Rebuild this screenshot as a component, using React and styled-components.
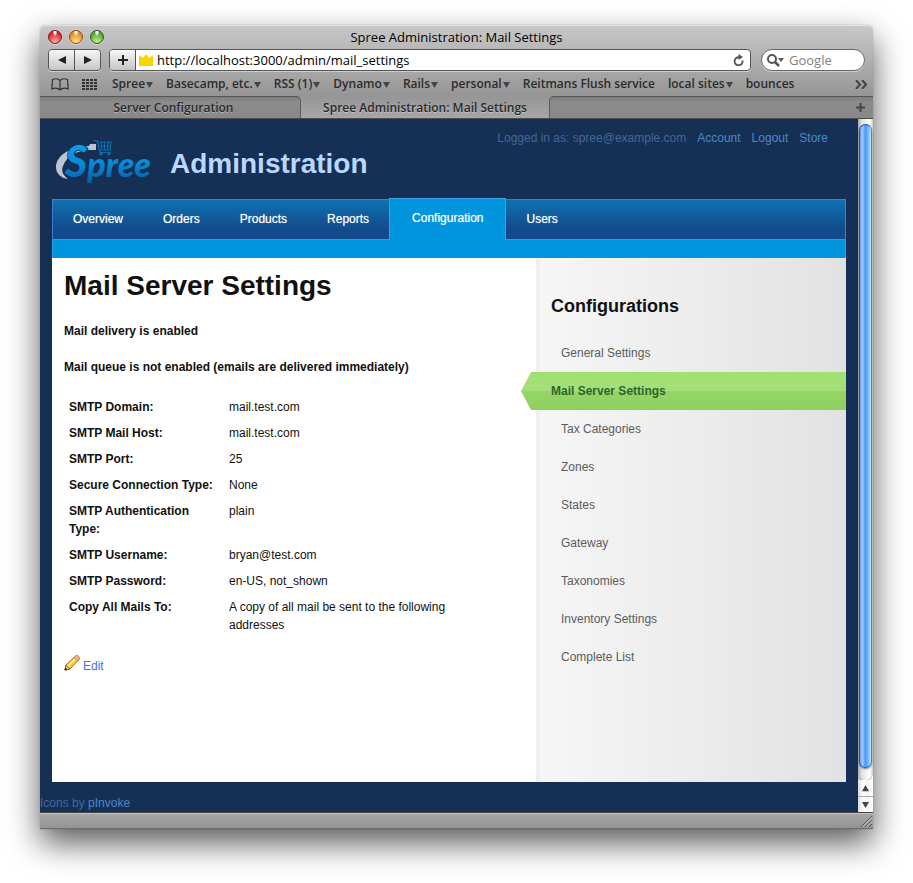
import React from "react";
import styled, { createGlobalStyle, css } from "styled-components";

const chromeFont = `"Open Sans", "Noto Sans", sans-serif`;
const pageFont = `"Liberation Sans", Arial, sans-serif`;

const GlobalStyle = createGlobalStyle`
  *, *::before, *::after { box-sizing: border-box; }
  body { margin: 0; background: #fff; }
  h1, h2, p, ul { margin: 0; padding: 0; }
  ul { list-style: none; }
  a { text-decoration: none; }
  button, input { font: inherit; color: inherit; margin: 0; padding: 0; border: 0; background: none; }
`;

const Desktop = styled.div`
  min-height: 100vh;
  padding: 25px 40px 54px;
  display: flex;
  overflow: hidden;
`;

const Window = styled.div`
  flex: 1;
  min-width: 0;
  display: flex;
  flex-direction: column;
  border-radius: 5px 5px 0 0;
  box-shadow: 0 0 1px rgba(0, 0, 0, 0.5), 0 14px 32px rgba(0, 0, 0, 0.65);
`;

const Chrome = styled.header`
  font-family: ${chromeFont};
  color: #000;
  border-radius: 5px 5px 0 0;
  background: linear-gradient(#c9c9c9, #969696 70px);
  box-shadow: inset 0 1px 0 #e4e4e4;
`;

const TitleBar = styled.div`
  height: 23px;
  display: grid;
  grid-template-columns: 80px 1fr 80px;
  align-items: center;
  padding: 0 8px;
`;

const Lights = styled.div`
  display: flex;
  gap: 7px;
`;

const Light = styled.button`
  width: 14px;
  height: 14px;
  border-radius: 50%;
  border: 1px solid ${(p) => p.$edge};
  background: radial-gradient(ellipse at 50% 8%, #fff 0 8%, transparent 30%),
    radial-gradient(circle at 50% 90%, ${(p) => p.$glow}, ${(p) => p.$base} 70%);
  box-shadow: 0 1px 0 rgba(255, 255, 255, 0.5);
`;

const Title = styled.div`
  text-align: center;
  font-size: 13px;
  line-height: 20px;
`;

const Toolbar = styled.div`
  height: 24px;
  display: flex;
  align-items: center;
  padding: 0 8px;
  gap: 8px;
`;

const ButtonGroup = styled.div`
  display: flex;
  border: 1px solid #555;
  border-radius: 4px;
  box-shadow: 0 1px 0 rgba(255, 255, 255, 0.45);
  overflow: hidden;
`;

const ToolButton = styled.button`
  width: 25px;
  height: 20px;
  display: flex;
  align-items: center;
  justify-content: center;
  background: linear-gradient(#f8f8f8, #c6c6c6);
  & + & { width: 26px; border-left: 1px solid #555; }
`;

const AddressBar = styled(ButtonGroup)`
  flex: 1;
  min-width: 0;
  background: #fff;
  margin-right: 2px;
`;

const AddressLabel = styled.label`
  flex: 1;
  min-width: 0;
  display: flex;
  align-items: center;
  gap: 4px;
  padding: 0 3px;
  border-left: 1px solid #555;
`;

const AddressInput = styled.input`
  flex: 1;
  min-width: 0;
  font-size: 13px;
  line-height: 20px;
  height: 20px;
  outline: none;
`;

const Reload = styled.button`
  width: 22px;
  display: flex;
  align-items: center;
  justify-content: center;
`;

const Search = styled.label`
  width: 104px;
  height: 22px;
  display: flex;
  align-items: center;
  gap: 4px;
  padding: 0 5px;
  border: 1px solid #666;
  border-radius: 11px;
  background: #fff;
  box-shadow: 0 1px 0 rgba(255, 255, 255, 0.45);
`;

const SearchInput = styled.input`
  flex: 1;
  min-width: 0;
  font-size: 13px;
  height: 20px;
  outline: none;
  &::placeholder { color: #808080; opacity: 1; }
`;

const Bookmarks = styled.nav`
  height: 24px;
  display: flex;
  align-items: center;
  padding: 0 6px 0 11px;
  font-size: 12px;
  font-weight: 600;
  color: #2c2c2c;
  text-shadow: 0 1px 0 rgba(255, 255, 255, 0.35);
`;

const IconButton = styled.button`
  display: flex;
  align-items: center;
  margin-right: ${(p) => p.$gap || 0}px;
`;

const BookmarkList = styled.div`
  flex: 1;
  min-width: 0;
  display: flex;
  gap: 13px;
  overflow: hidden;
`;

const Bookmark = styled.button`
  display: flex;
  align-items: center;
  gap: 1px;
  line-height: 18px;
  white-space: nowrap;
`;

const TabStrip = styled.div`
  height: 23px;
  display: flex;
  font-size: 12px;
  font-weight: 600;
  color: #2a2a2a;
  border-bottom: 1px solid #4d4d4d;
  background: linear-gradient(#969696, #a6a6a6);
`;

const darkTab = css`
  background: linear-gradient(#7e7e7e, #8b8b8b 5px, #888);
  border-top: 1px solid #555;
`;

const Tab = styled.button`
  flex: 0 1 ${(p) => (p.$active ? 248 : 261)}px;
  padding-left: ${(p) => (p.$active ? 0 : 7)}px;
  text-align: center;
  white-space: nowrap;
  text-shadow: 0 1px 0 rgba(255, 255, 255, 0.35);
  ${(p) =>
    !p.$active &&
    css`
      ${darkTab}
      border-right: 1px solid #5c5c5c;
      border-top-right-radius: 5px;
    `}
`;

const TabRest = styled.div`
  flex: 1;
  display: flex;
  align-items: center;
  justify-content: flex-end;
  padding-right: 8px;
  ${darkTab}
  border-left: 1px solid #5c5c5c;
  border-top-left-radius: 5px;
`;

const Viewport = styled.div`
  flex: 1;
  display: flex;
`;

const Page = styled.div`
  flex: 1;
  min-width: 0;
  display: flex;
  flex-direction: column;
  background: #162f54;
  font-family: ${pageFont};
  font-size: 12px;
  line-height: 18px;
  color: #111;
`;

const Header = styled.header`
  height: 80px;
  display: flex;
  justify-content: space-between;
  padding: 10px 30px 0 16px;
`;

const Brand = styled.div`
  display: flex;
  align-items: center;
  gap: 16px;
  height: 70px;
`;

const BrandTitle = styled.h1`
  font-size: 28px;
  line-height: 36px;
  color: #b8d8ff;
`;

const UserLinks = styled.div`
  display: flex;
  gap: 11px;
  color: #40689c;
  a { color: #4a8ac8; }
`;

const Nav = styled.nav`
  margin: 0 12px;
  height: 41px;
  display: flex;
  align-items: stretch;
  border: 1px solid #3a7fd0;
  border-width: 1px 1px 0;
  background: linear-gradient(#0e72b1, #124a8b 75%);
  box-shadow: inset 0 -1px 0 #2f9bea;
`;

const NavLink = styled.a`
  padding: 10px 20px;
  color: #fff;
  text-shadow: 0 0 1px rgba(255, 255, 255, 0.6);
  ${(p) =>
    p.$active &&
    css`
      margin-top: -2px;
      padding: 10px 22px;
      background: #0095dc;
      border: 1px solid #3a9fee;
      border-bottom: 0;
    `}
`;

const SubNav = styled.div`
  margin: 0 12px;
  height: 18px;
  background: #0095dc;
  border: solid #2f9bea;
  border-width: 0 1px;
`;

const Columns = styled.div`
  flex: 1;
  margin: 0 12px;
  display: grid;
  grid-template-columns: minmax(0, 484fr) minmax(0, 310fr);
  background: #fff;
`;

const Main = styled.main`
  padding: 10px 12px 0;
`;

const PageTitle = styled.h1`
  font-size: 28px;
  line-height: 36px;
  margin-bottom: 18px;
`;

const Notice = styled.p`
  font-weight: bold;
  margin-bottom: 18px;
`;

const SettingsTable = styled.table`
  width: 100%;
  max-width: 400px;
  table-layout: fixed;
  border-collapse: collapse;
  margin-bottom: 17px;
  th, td {
    padding: 4px 5px;
    text-align: left;
    vertical-align: top;
  }
  th { width: 160px; }
`;

const EditLink = styled.a`
  display: inline-flex;
  align-items: flex-end;
  gap: 3px;
  color: #3b73f0;
  svg { margin-bottom: 4px; }
`;

const Sidebar = styled.aside`
  padding-top: 36px;
  background: linear-gradient(90deg, #f0f0f0 4px, #f6f6f6 4px, #e2e2e2);
`;

const SidebarTitle = styled.h2`
  font-size: 18px;
  line-height: 24px;
  padding-left: 15px;
  margin-bottom: 16px;
`;

const SidebarLink = styled.a`
  display: block;
  padding: 10px 0 10px 25px;
  color: #5c5c5c;
  ${(p) =>
    p.$active &&
    css`
      margin-left: -15px;
      padding-left: 30px;
      font-weight: bold;
      color: #2c662c;
      background: linear-gradient(#a0e070, #a6de7a 50%, #95d565 50%, #90d060);
      clip-path: polygon(10px 0, 100% 0, 100% 100%, 10px 100%, 0 50%);
    `}
`;

const Footer = styled.footer`
  padding: 12px 0 0;
  height: 30px;
  color: #40689c;
  a { color: #4a8ac8; }
`;

const Scrollbar = styled.div`
  width: 15px;
  display: flex;
  flex-direction: column;
  background: linear-gradient(90deg, #bbb, #eee 4px, #fff);
`;

const Track = styled.div`
  flex: 1;
  display: flex;
  flex-direction: column;
  padding: 5px 1px 0;
  border-radius: 0 0 8px 8px;
  background: linear-gradient(90deg, #aaa, #e4e4e4 4px, #fff 12px, #ccc);
  box-shadow: 0 1px 0 #999;
`;

const Thumb = styled.div`
  flex: 1;
  margin-bottom: 12px;
  border: 1px solid #1c55c0;
  border-right-color: #3b86d8;
  border-radius: 7px;
  background: linear-gradient(90deg, #5d96ea, #a4caf6 2px, #7cb4f4 4px, #4a96f2 5px, #6cb6fb 8px, #b4e8ff 11px);
  box-shadow: 0 1px 2px rgba(0, 0, 0, 0.5);
`;

const ScrollButton = styled.button`
  height: 16px;
  display: flex;
  align-items: center;
  justify-content: center;
  background: linear-gradient(90deg, #dcdcdc, #fff 5px, #f4f4f4 9px, #fff);
  & + & { border-top: 1px solid #aaa; }
`;

const StatusBar = styled.div`
  height: 17px;
  display: flex;
  justify-content: flex-end;
  align-items: flex-end;
  padding: 0 1px 1px;
  border-top: 1px solid #444;
  border-bottom: 1px solid #6c6c6c;
  background: linear-gradient(#c4c4c4 1px, #a6a6a6 1px, #949494);
`;

function Triangle({ dir = "down", size = 8, color = "#444" }) {
  const points = {
    down: "0,1 8,1 4,8",
    up: "0,7 8,7 4,0",
    left: "0,4 8,0 8,8",
    right: "8,4 0,0 0,8",
  };
  return (
    <svg width={size} height={size} viewBox="0 0 8 8" aria-hidden="true">
      <polygon points={points[dir]} fill={color} />
    </svg>
  );
}

function SpreeLogo() {
  return (
    <svg width="98" height="54" viewBox="0 -3 98 54" role="img" aria-label="Spree">
      <defs>
        <linearGradient id="ink" gradientUnits="userSpaceOnUse" x1="0" y1="4" x2="0" y2="46">
          <stop offset="0" stopColor="#0aa0ee" />
          <stop offset="0.5" stopColor="#0888d2" />
          <stop offset="1" stopColor="#0a5496" />
        </linearGradient>
      </defs>
      <path d="M40 4H34L33 6C16 6 0 15 0 27C0 34 5 38 12 39C7 35 5 31 7 26C11 15 22 11 32 10H40Z" fill="#bcc5cc" />
      <g fill="none" stroke="#0a6cae" strokeWidth="1.2">
        <path d="M38 .6h3l3 12h11M41 2h14l-1 8H43M45 2l1 8M48.500 2v8M52 2l-.5 8M42 6h12.500" />
      </g>
      <circle cx="45" cy="14" r="1.500" fill="#0a6cae" />
      <circle cx="53" cy="14" r="1.500" fill="#0a6cae" />
      <text
        x="9"
        y="37"
        fontSize="43"
        fill="url(#ink)"
        stroke="#162f54"
        strokeWidth="2"
        paintOrder="stroke"
        fontFamily="Lato, sans-serif"
        fontWeight="900"
        fontStyle="italic"
      >
        S<tspan fontSize="34">pree</tspan>
      </text>
    </svg>
  );
}

const bookmarks = [
  ["Spree", true],
  ["Basecamp, etc.", true],
  ["RSS (1)", true],
  ["Dynamo", true],
  ["Rails", true],
  ["personal", true],
  ["Reitmans Flush service", false],
  ["local sites", true],
  ["bounces", false],
];

const navItems = ["Overview", "Orders", "Products", "Reports", "Configuration", "Users"];

const settings = [
  ["SMTP Domain:", "mail.test.com"],
  ["SMTP Mail Host:", "mail.test.com"],
  ["SMTP Port:", "25"],
  ["Secure Connection Type:", "None"],
  ["SMTP Authentication Type:", "plain"],
  ["SMTP Username:", "bryan@test.com"],
  ["SMTP Password:", "en-US, not_shown"],
  ["Copy All Mails To:", "A copy of all mail be sent to the following addresses"],
];

const configurations = [
  "General Settings",
  "Mail Server Settings",
  "Tax Categories",
  "Zones",
  "States",
  "Gateway",
  "Taxonomies",
  "Inventory Settings",
  "Complete List",
];

function BrowserChrome() {
  return (
    <Chrome>
      <TitleBar>
        <Lights>
          <Light aria-label="Close" $edge="#7c1a1a" $base="#d8232b" $glow="#ffb0a8" />
          <Light aria-label="Minimize" $edge="#8a4a12" $base="#e88a28" $glow="#ffe68a" />
          <Light aria-label="Zoom" $edge="#2d5a1a" $base="#55a535" $glow="#c8f08a" />
        </Lights>
        <Title>Spree Administration: Mail Settings</Title>
      </TitleBar>
      <Toolbar>
        <ButtonGroup>
          <ToolButton aria-label="Back"><Triangle dir="left" color="#222" /></ToolButton>
          <ToolButton aria-label="Forward"><Triangle dir="right" color="#222" /></ToolButton>
        </ButtonGroup>
        <AddressBar>
          <ToolButton aria-label="Add bookmark">
            <svg width="10" height="10" aria-hidden="true"><path d="M5 0v10M0 5h10" stroke="#222" strokeWidth="2" /></svg>
          </ToolButton>
          <AddressLabel>
            <svg width="14" height="12" aria-hidden="true">
              <path d="M0 1l4 3 3-4 3 4 4-3v11H0z" fill="#f8d400" />
            </svg>
            <AddressInput aria-label="Address" defaultValue="http://localhost:3000/admin/mail_settings" />
          </AddressLabel>
          <Reload aria-label="Reload">
            <svg width="12" height="12" viewBox="0 0 12 12" aria-hidden="true">
              <path d="M9.500 6.500a4 4 0 1 1-3.500-3.200" fill="none" stroke="#555" strokeWidth="1.800" />
              <path d="M5.500 0l4.500 3-4.500 3z" fill="#555" />
            </svg>
          </Reload>
        </AddressBar>
        <Search>
          <svg width="18" height="13" viewBox="0 0 18 13" aria-hidden="true">
            <circle cx="5" cy="5" r="4" fill="none" stroke="#555" strokeWidth="2" />
            <path d="M8 8l4 4" stroke="#555" strokeWidth="2.500" />
            <path d="M11 4h6l-3 4z" fill="#555" />
          </svg>
          <SearchInput type="search" aria-label="Search" placeholder="Google" />
        </Search>
      </Toolbar>
      <Bookmarks aria-label="Bookmarks">
        <IconButton aria-label="Show all bookmarks" $gap={13}>
          <svg width="18" height="13" viewBox="0 0 18 13" fill="none" stroke="#333" strokeWidth="1.200" aria-hidden="true">
            <path d="M9 2.500C7 .5 4 .5 1.500 1.500L.8 11c2.500-1 6-1 8.200 1 2.200-2 5.700-2 8.200-1l-.7-9.500C14 .5 11 .5 9 2.500zM9 2.500V12" />
          </svg>
        </IconButton>
        <IconButton aria-label="Top sites" $gap={14}>
          <svg width="16" height="11" aria-hidden="true">
            {[0, 3, 6, 9].map((y) =>
              [0, 4, 8, 12].map((x) => <rect key={`${x}-${y}`} x={x} y={y} width="3" height="2" fill="#333" />)
            )}
          </svg>
        </IconButton>
        <BookmarkList>
          {bookmarks.map(([name, menu]) => (
            <Bookmark key={name}>
              {name}
              {menu && <Triangle size={7} />}
            </Bookmark>
          ))}
        </BookmarkList>
        <IconButton aria-label="More bookmarks">
          <svg width="12" height="9" fill="none" stroke="#444" strokeWidth="2" aria-hidden="true">
            <path d="M1 0l4 4.500-4 4.500M7 0l4 4.500-4 4.500" />
          </svg>
        </IconButton>
      </Bookmarks>
      <TabStrip>
        <Tab>Server Configuration</Tab>
        <Tab $active>Spree Administration: Mail Settings</Tab>
        <TabRest>
          <IconButton aria-label="New tab">
            <svg width="9" height="9" aria-hidden="true"><path d="M4.500 0v9M0 4.500h9" stroke="#444" strokeWidth="2" /></svg>
          </IconButton>
        </TabRest>
      </TabStrip>
    </Chrome>
  );
}

function AdminPage() {
  return (
    <Page>
      <Header>
        <Brand>
          <SpreeLogo />
          <BrandTitle>Administration</BrandTitle>
        </Brand>
        <UserLinks>
          <span>Logged in as: spree@example.com</span>
          <a href="#account">Account</a>
          <a href="#logout">Logout</a>
          <a href="#store">Store</a>
        </UserLinks>
      </Header>
      <Nav>
        {navItems.map((item) => (
          <NavLink key={item} href={`#${item.toLowerCase()}`} $active={item === "Configuration"}>
            {item}
          </NavLink>
        ))}
      </Nav>
      <SubNav />
      <Columns>
        <Main>
          <PageTitle>Mail Server Settings</PageTitle>
          <Notice>Mail delivery is enabled</Notice>
          <Notice>Mail queue is not enabled (emails are delivered immediately)</Notice>
          <SettingsTable>
            <tbody>
              {settings.map(([label, value]) => (
                <tr key={label}>
                  <th scope="row">{label}</th>
                  <td>{value}</td>
                </tr>
              ))}
            </tbody>
          </SettingsTable>
          <EditLink href="#edit">
            <svg width="16" height="16" viewBox="0 0 16 16" aria-hidden="true">
              <path d="M1 15l1-5L11 1.500c1-1 2.500-1 3.500 0s1 2.500 0 3.500L6 14z" fill="#f5cf45" stroke="#a86a20" />
              <path d="M4 11l8-8" stroke="#fff29a" strokeWidth="1.500" />
              <path d="M10 2.500L11.500 1c1-.8 2.200-.6 3 .3s1 2 .3 3L13.500 5.800z" fill="#eeb795" stroke="#b87850" strokeWidth=".8" />
              <path d="M1 15l1-5 4 4z" fill="#e8b888" stroke="#8a5520" strokeWidth=".7" />
              <path d="M.5 15.500l.7-3 2.300 2.300z" fill="#3a2010" />
            </svg>
            Edit
          </EditLink>
        </Main>
        <Sidebar>
          <SidebarTitle>Configurations</SidebarTitle>
          <ul>
            {configurations.map((item) => (
              <li key={item}>
                <SidebarLink href="#config" $active={item === "Mail Server Settings"}>
                  {item}
                </SidebarLink>
              </li>
            ))}
          </ul>
        </Sidebar>
      </Columns>
      <Footer>
        Icons by <a href="#pinvoke">pInvoke</a>
      </Footer>
    </Page>
  );
}

export default function App() {
  return (
    <>
      <GlobalStyle />
      <Desktop>
        <Window>
          <BrowserChrome />
          <Viewport>
            <AdminPage />
            <Scrollbar>
              <Track>
                <Thumb />
              </Track>
              <ScrollButton aria-label="Scroll up"><Triangle dir="up" size={7} /></ScrollButton>
              <ScrollButton aria-label="Scroll down"><Triangle size={7} /></ScrollButton>
            </Scrollbar>
          </Viewport>
          <StatusBar>
            <svg width="12" height="12" aria-hidden="true">
              <path d="M1 12L12 1M5 12l7-7M9 12l3-3" stroke="#555" strokeWidth="1" />
              <path d="M2 12.500L12.500 2M6 12.500l6.500-6.500" stroke="#ddd" strokeWidth=".6" />
            </svg>
          </StatusBar>
        </Window>
      </Desktop>
    </>
  );
}
